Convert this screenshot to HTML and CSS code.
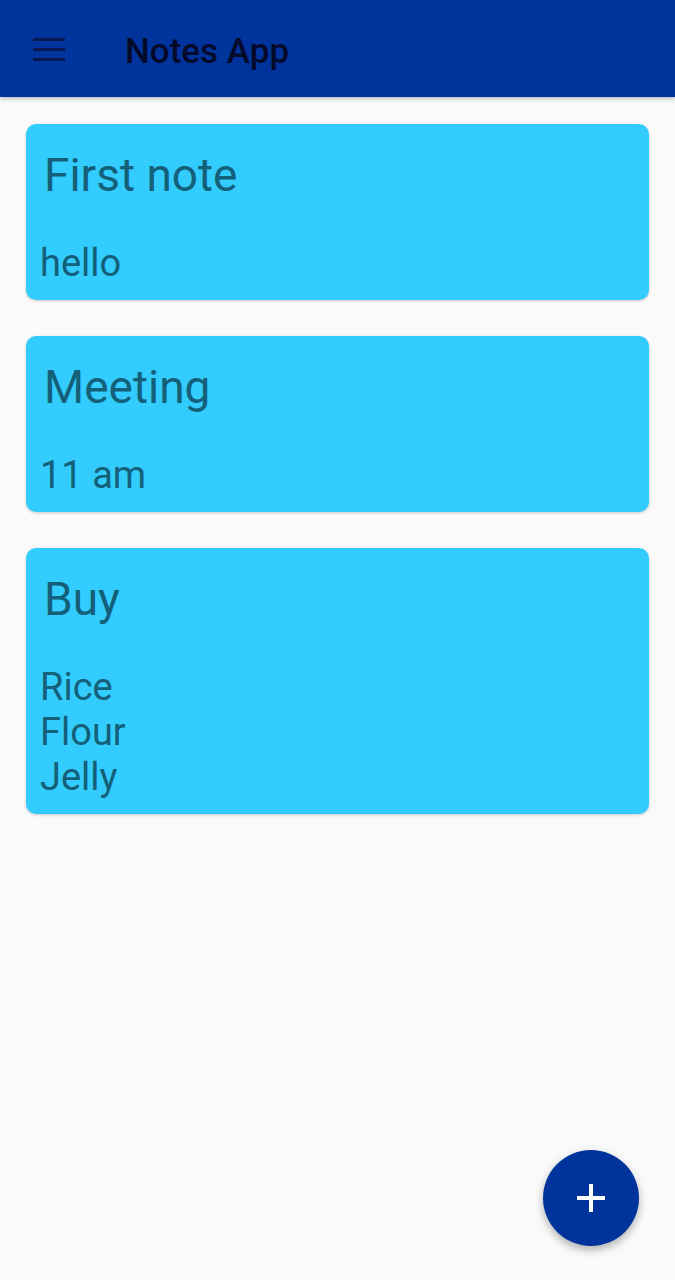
FILE: index.html
```html
<!DOCTYPE html>
<html>
<head>
<meta charset="utf-8">
<link rel="stylesheet" href="styles.css">
</head>
<body>
<header class="appbar">
  <svg class="menu" width="32" height="24" viewBox="0 0 32 24">
    <rect x="0" y="1" width="32" height="3" fill="#0a1650"/>
    <rect x="0" y="11" width="32" height="3" fill="#0a1650"/>
    <rect x="0" y="21" width="32" height="3" fill="#0a1650"/>
  </svg>
  <h1 class="title">Notes App</h1>
</header>
<main class="list">
  <div class="card">
    <div class="card-title">First note</div>
    <div class="card-body">hello</div>
  </div>
  <div class="card">
    <div class="card-title">Meeting</div>
    <div class="card-body">11 am</div>
  </div>
  <div class="card">
    <div class="card-title">Buy</div>
    <div class="card-body">Rice<br>Flour<br>Jelly</div>
  </div>
</main>
<button class="fab">
  <svg width="28" height="28" viewBox="0 0 28 28">
    <rect x="12" y="0" width="4" height="28" fill="#fff"/>
    <rect x="0" y="12" width="28" height="4" fill="#fff"/>
  </svg>
</button>
</body>
</html>
```
FILE: styles.css
```css
* { box-sizing: border-box; }
html, body { margin: 0; padding: 0; }
body {
  background: #fafafa;
  font-family: Roboto, "Liberation Sans", sans-serif;
  width: 675px;
  height: 1280px;
  overflow: hidden;
  position: relative;
}
.appbar {
  height: 97px;
  background: #00339c;
  display: flex;
  align-items: center;
  padding-left: 33px;
  box-shadow: 0 2px 4px rgba(0,0,0,0.25);
}
.menu { display: block; }
.title {
  margin: 6px 0 0 60px;
  font-size: 35px;
  font-weight: 500;
  color: #050a2a;
  letter-spacing: 0;
}
.list {
  display: flex;
  flex-direction: column;
  gap: 36px;
  padding: 27px 26px 0 26px;
}
.card {
  background: #33ccff;
  border-radius: 10px;
  box-shadow: 0 1px 3px rgba(0,0,0,0.2);
  padding: 24px 14px 14px 14px;
  color: #146078;
}
.card-title {
  font-size: 46px;
  line-height: 54px;
  padding-left: 4px;
  margin-bottom: 39px;
}
.card-body {
  font-size: 38px;
  line-height: 45px;
}
.fab {
  position: absolute;
  left: 543px;
  top: 1150px;
  width: 96px;
  height: 96px;
  border-radius: 50%;
  border: none;
  background: #00339c;
  display: flex;
  align-items: center;
  justify-content: center;
  box-shadow: 0 4px 8px rgba(0,0,0,0.3);
  padding: 0;
}
```
